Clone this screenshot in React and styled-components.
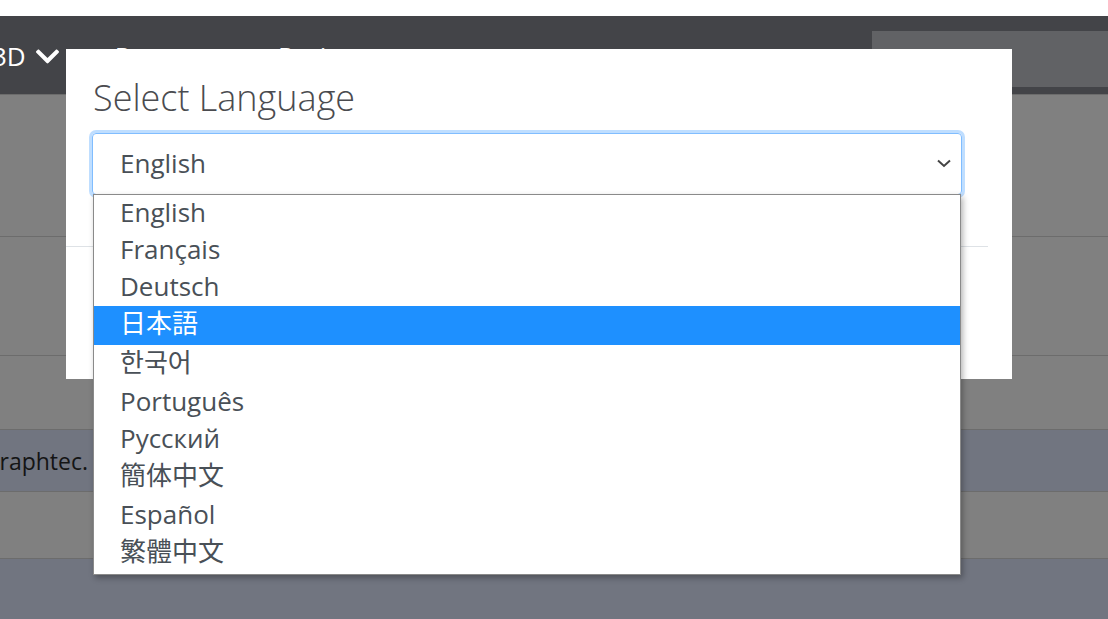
import React from 'react'
import styled, { createGlobalStyle } from 'styled-components'
import { FaChevronDown } from 'react-icons/fa'

const GlobalStyle = createGlobalStyle`
    html, body {
        margin: 0;
        padding: 0;
        background: #ffffff;
        overflow: hidden;
    }
    * { box-sizing: border-box; }
`

const languages = [
    { label: 'English' },
    { label: 'Français' },
    { label: 'Deutsch' },
    { label: '日本語', cjk: true, active: true },
    { label: '한국어', cjk: true },
    { label: 'Português' },
    { label: 'Русский' },
    { label: '簡体中文', cjk: true },
    { label: 'Español' },
    { label: '繁體中文', cjk: true },
]

const rows = [
    { height: 142 },
    { height: 119 },
    { height: 74 },
    { height: 62, tint: true, text: 'graphtec.' },
    { height: 67 },
    { height: 70, tint: true },
]

export default function App() {
    return (
        <Page>
            <GlobalStyle />
            <TopStrip />
            <Navbar>
                <NavInner>
                    <Brand>3D <FaChevronDown /></Brand>
                    <NavLink>Patterns</NavLink>
                    <NavLink>Projects</NavLink>
                </NavInner>
                <NavSearch />
            </Navbar>
            <Table>
                {rows.map((r, i) => (
                    <Row key={i} $h={r.height} $tint={r.tint}>
                        {r.text && <Cell>{r.text}</Cell>}
                    </Row>
                ))}
            </Table>

            <Modal>
                <ModalHeader>
                    <Title>Select Language</Title>
                    <SelectWrap>
                        <SelectBox>
                            <span>English</span>
                            <Caret viewBox="0 0 16 16">
                                <path d="M2 5.5 L8 11 L14 5.5" />
                            </Caret>
                        </SelectBox>
                        <Options>
                            {languages.map((l) => (
                                <Option key={l.label} $cjk={l.cjk} $active={l.active}>
                                    {l.label}
                                </Option>
                            ))}
                        </Options>
                    </SelectWrap>
                </ModalHeader>
                <Divider />
            </Modal>
        </Page>
    )
}

const Page = styled.div`
    position: relative;
    width: 1108px;
    height: 619px;
    overflow: hidden;
    font-family: 'Open Sans', 'Noto Sans CJK JP', sans-serif;
`
const TopStrip = styled.div`
    height: 16px;
    background: #ffffff;
`
const Navbar = styled.nav`
    display: flex;
    height: 78px;
    background: #434448;
`
const NavInner = styled.div`
    display: flex;
    align-items: flex-start;
    gap: 54px;
    margin-left: -8px;
    padding-top: 22px;
    color: #ffffff;
    font-size: 26px;
    line-height: 36px;
`
const Brand = styled.div`
    display: flex;
    align-items: center;
    gap: 8px;

    svg {
        width: 27px;
        height: 27px;
    }
`
const NavLink = styled.div`
    padding-right: 7px;
`
const NavSearch = styled.div`
    margin-left: auto;
    margin-top: 15px;
    width: 236px;
    height: 56px;
    background: #616265;
`
const Table = styled.div`
    display: flex;
    flex-direction: column;
`
const Row = styled.div`
    height: ${p => p.$h}px;
    flex-shrink: 0;
    display: flex;
    align-items: center;
    background: ${p => p.$tint ? '#717580' : '#808080'};
    border-top: 1px solid #6c6c6c;
`
const Cell = styled.div`
    margin-left: -13px;
    font-size: 23px;
    color: #141414;
    font-family: 'Open Sans', sans-serif;
`
const Modal = styled.div`
    position: absolute;
    left: 66px;
    top: 49px;
    width: 946px;
    height: 330px;
    background: #ffffff;
`
const ModalHeader = styled.div`
    padding: 26px 50px 0 26px;
`
const Title = styled.h2`
    margin: 0 0 12px 1px;
    font-weight: 300;
    font-size: 36px;
    line-height: 46px;
    color: #4a4b4f;
`
const SelectWrap = styled.div`
    position: relative;
`
const SelectBox = styled.div`
    display: flex;
    align-items: center;
    justify-content: space-between;
    height: 62px;
    padding: 0 9px 2px 27px;
    border: 1px solid #80bdff;
    border-radius: 4px;
    box-shadow: 0 0 0 3px rgba(0, 123, 255, 0.25);
    font-size: 26px;
    color: #495057;
`
const Caret = styled.svg`
    width: 16px;
    height: 16px;
    fill: none;
    stroke: #444;
    stroke-width: 2;
`
const Options = styled.ul`
    position: absolute;
    left: 1px;
    top: 61px;
    width: 868px;
    margin: 0;
    padding: 0 0 1px;
    list-style: none;
    background: #ffffff;
    border: 1px solid #8a8a8a;
    box-shadow: 2px 3px 6px rgba(0, 0, 0, 0.3);
    z-index: 2;
`
const Option = styled.li`
    height: ${p => p.$cjk ? 39 : 37}px;
    line-height: 35px;
    padding-left: 26px;
    font-size: 26px;
    color: ${p => p.$active ? '#ffffff' : '#495057'};
    background: ${p => p.$active ? '#1e90ff' : 'transparent'};
`
const Divider = styled.div`
    margin: 51px 24px 0 0;
    border-top: 1px solid #dee2e6;
`
